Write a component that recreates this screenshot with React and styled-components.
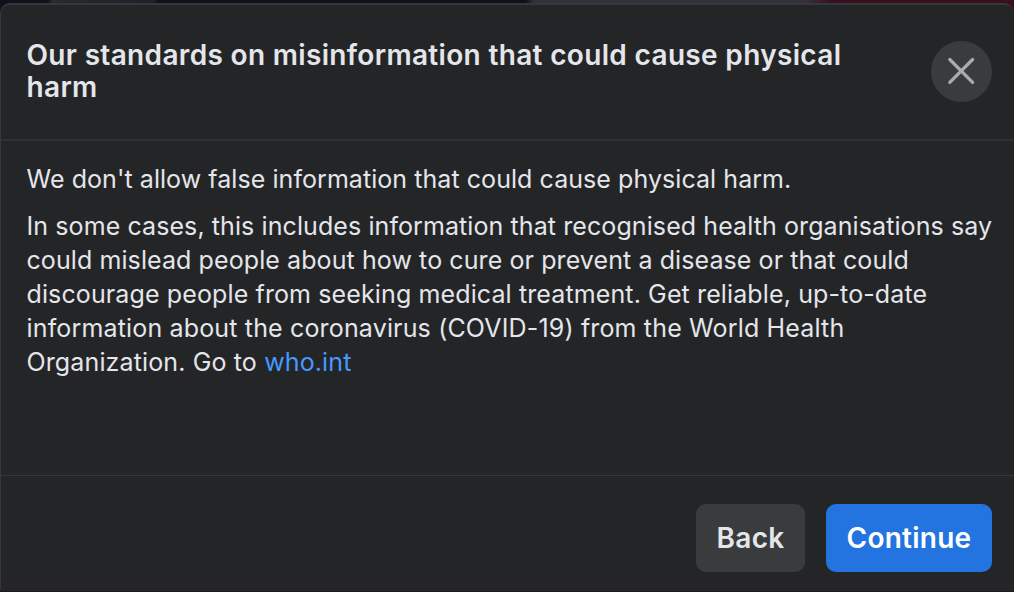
import React from 'react'
import styled, { createGlobalStyle } from 'styled-components'

const GlobalStyle = createGlobalStyle`
  body {
    margin: 0;
    background: #10111a;
    font-family: Inter, 'Liberation Sans', sans-serif;
  }
`

const Page = styled.div`
  height: 592px;
  box-sizing: border-box;
  padding: 3px 0 1px;
  overflow: hidden;
  background:
    linear-gradient(90deg, #10111c 0, #10111c 48px, #292930 52px, #211f27 154px, #10111c 158px, #10111c 526px, #33323c 534px, #34333d 804px, #3a101c 830px, #3b101b 100%) 0 0 / 100% 14px no-repeat,
    #21151f;
`

const Dialog = styled.main`
  display: flex;
  flex-direction: column;
  height: 100%;
  box-sizing: border-box;
  border: 1px solid #36373a;
  border-width: 2px 0 0 1px;
  border-radius: 10px 10px 2px 2px;
  background: #242527;
  color: #e4e6eb;
`

const Header = styled.header`
  display: flex;
  justify-content: space-between;
  align-items: flex-start;
  height: 136px;
  box-sizing: border-box;
  padding: 34px 22px 0 25.5px;
  border-bottom: 2px solid #303134;
`

const Title = styled.h1`
  margin: 0;
  font-size: 28px;
  font-weight: 600;
  line-height: 32px;
  letter-spacing: 0.33px;
  white-space: nowrap;
`

const CloseButton = styled.button`
  display: flex;
  align-items: center;
  justify-content: center;
  width: 61px;
  height: 61px;
  margin-top: 2px;
  padding: 0;
  border: 0;
  border-radius: 50%;
  background: #3a3b3c;
  color: #a9abb0;
`

const Content = styled.section`
  flex: 1;
  padding: 21px 0 0 25.5px;
`

const Paragraph = styled.p`
  margin: 0 0 13px;
  font-size: 25px;
  line-height: 34px;
  white-space: nowrap;
`

const Line = styled.span`
  display: block;
  letter-spacing: ${({ $tracking }) => $tracking}px;
`

const Link = styled.a`
  color: #4599ff;
  text-decoration: none;
`

const Footer = styled.footer`
  display: flex;
  justify-content: flex-end;
  gap: 21px;
  height: 116px;
  box-sizing: border-box;
  padding: 28px 22px 0;
  border-top: 1px solid #37383a;
`

const Button = styled.button`
  width: ${({ $primary }) => ($primary ? 166 : 109)}px;
  height: 68px;
  padding: 0;
  border: 0;
  border-radius: 10px;
  background: ${({ $primary }) => ($primary ? '#2374e1' : '#3a3b3c')};
  color: ${({ $primary }) => ($primary ? '#fff' : '#e4e6eb')};
  font-family: inherit;
  font-size: 28px;
  font-weight: 600;
  letter-spacing: 0.25px;
`

const CloseIcon = () => (
  <svg width="29" height="29" viewBox="0 0 29 29" fill="none" stroke="currentColor" strokeWidth="3.2" strokeLinecap="round">
    <path d="M2.8 2.5 L25.6 25.3 M25.6 2.5 L2.8 25.3" />
  </svg>
)

const App = () => {
  return (
    <Page>
      <GlobalStyle />
      <Dialog>
        <Header>
          <Title>
            Our standards on misinformation that could cause physical<br />
            harm
          </Title>
          <CloseButton aria-label="Close"><CloseIcon /></CloseButton>
        </Header>
        <Content>
          <Paragraph>
            <Line $tracking={0.06}>We don't allow false information that could cause physical harm.</Line>
          </Paragraph>
          <Paragraph>
            <Line $tracking={0.09}>In some cases, this includes information that recognised health organisations say</Line>
            <Line $tracking={0.09}>could mislead people about how to cure or prevent a disease or that could</Line>
            <Line $tracking={0.12}>discourage people from seeking medical treatment. Get reliable, up-to-date</Line>
            <Line $tracking={0.16}>information about the coronavirus (COVID-19) from the World Health</Line>
            <Line $tracking={0.13}>
              Organization. Go to <Link href="https://who.int">who.int</Link>
            </Line>
          </Paragraph>
        </Content>
        <Footer>
          <Button>Back</Button>
          <Button $primary>Continue</Button>
        </Footer>
      </Dialog>
    </Page>
  )
}

export default App
